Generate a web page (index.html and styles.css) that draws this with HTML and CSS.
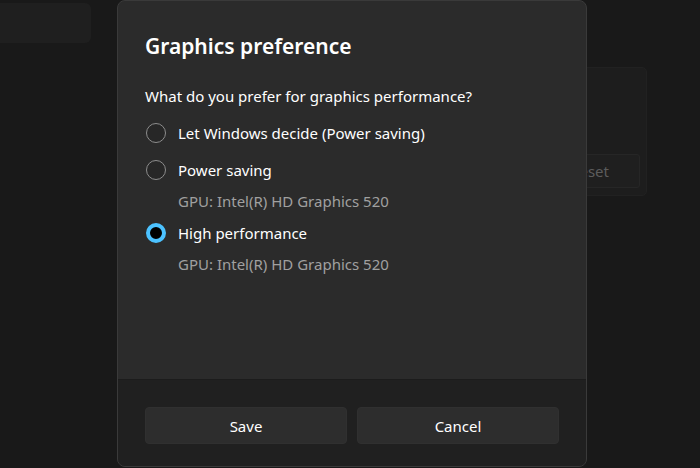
FILE: index.html
```html
<!DOCTYPE html>
<html>
<head>
<meta charset="utf-8">
<link rel="stylesheet" href="styles.css">
</head>
<body>
<div class="page">
  <div class="bg-left-card"></div>
  <div class="bg-right-card">
    <div class="bg-reset">Reset</div>
  </div>
</div>
<div class="dialog">
  <div class="dialog-body">
    <h1 class="title">Graphics preference</h1>
    <p class="question">What do you prefer for graphics performance?</p>
    <div class="options">
      <div class="option">
        <span class="radio"></span>
        <span class="label">Let Windows decide (Power saving)</span>
      </div>
      <div class="option">
        <span class="radio"></span>
        <span class="label">Power saving</span>
      </div>
      <div class="sub">GPU: Intel(R) HD Graphics 520</div>
      <div class="option">
        <span class="radio checked"></span>
        <span class="label">High performance</span>
      </div>
      <div class="sub">GPU: Intel(R) HD Graphics 520</div>
    </div>
  </div>
  <div class="dialog-footer">
    <button class="btn">Save</button>
    <button class="btn">Cancel</button>
  </div>
</div>
</body>
</html>
```
FILE: styles.css
```css
* { box-sizing: border-box; }
html, body {
  margin: 0;
  width: 700px;
  height: 468px;
  overflow: hidden;
}
body {
  background: #191919;
  font-family: "Noto Sans", "Open Sans", sans-serif;
  color: #fff;
  position: relative;
}
.page {
  position: relative;
  width: 700px;
  height: 468px;
}
.bg-left-card {
  width: 91px;
  height: 40px;
  margin-top: 3px;
  background: #1f1f1f;
  border-radius: 0 6px 6px 0;
}
.bg-right-card {
  width: 96px;
  height: 129px;
  margin-top: 24px;
  margin-left: 551px;
  background: #1d1d1d;
  border: 1px solid #212121;
  border-radius: 5px;
  padding: 86px 6px 0 8px;
}
.bg-reset {
  height: 34px;
  border: 1px solid #262626;
  background: #1f1f1f;
  border-radius: 3px;
  color: #5c5c5c;
  font-size: 15px;
  line-height: 32px;
  text-align: right;
  padding-right: 30px;
}
.dialog {
  position: absolute;
  left: 117px;
  top: 0;
  width: 470px;
  height: 467px;
  background: #2b2b2b;
  border: 1px solid #3a3a3a;
  border-radius: 8px;
  overflow: hidden;
  display: flex;
  flex-direction: column;
}
.dialog-body {
  flex: 1;
  padding: 31px 27px 0 27px;
}
.title {
  margin: 0;
  font-size: 21px;
  font-weight: 600;
  line-height: 28px;
  color: #fff;
}
.question {
  margin: 26px 0 0 0;
  font-size: 15px;
  line-height: 20px;
}
.options {
  margin-top: 8px;
  display: flex;
  flex-direction: column;
}
.option {
  height: 37px;
  display: flex;
  align-items: center;
  gap: 12px;
  padding-left: 1px;
  font-size: 15px;
}
.radio {
  width: 20px;
  height: 20px;
  border-radius: 50%;
  border: 1px solid #8d8d8d;
  background: #272727;
  flex: none;
}
.radio.checked {
  border: 4.5px solid #4cc2ff;
  background: #000;
}
.sub {
  height: 26px;
  line-height: 26px;
  padding-left: 33px;
  font-size: 15px;
  color: #a0a0a0;
}
.dialog-footer {
  height: 87px;
  flex: none;
  background: #202020;
  border-top: 1px solid #1c1c1c;
  padding: 27px 27px 0 27px;
  display: flex;
  gap: 10px;
  align-items: flex-start;
}
.btn {
  flex: 1;
  height: 37px;
  background: #2d2d2d;
  border: 1px solid #303030;
  border-radius: 4px;
  color: #fff;
  font-family: inherit;
  font-size: 15px;
}
```
